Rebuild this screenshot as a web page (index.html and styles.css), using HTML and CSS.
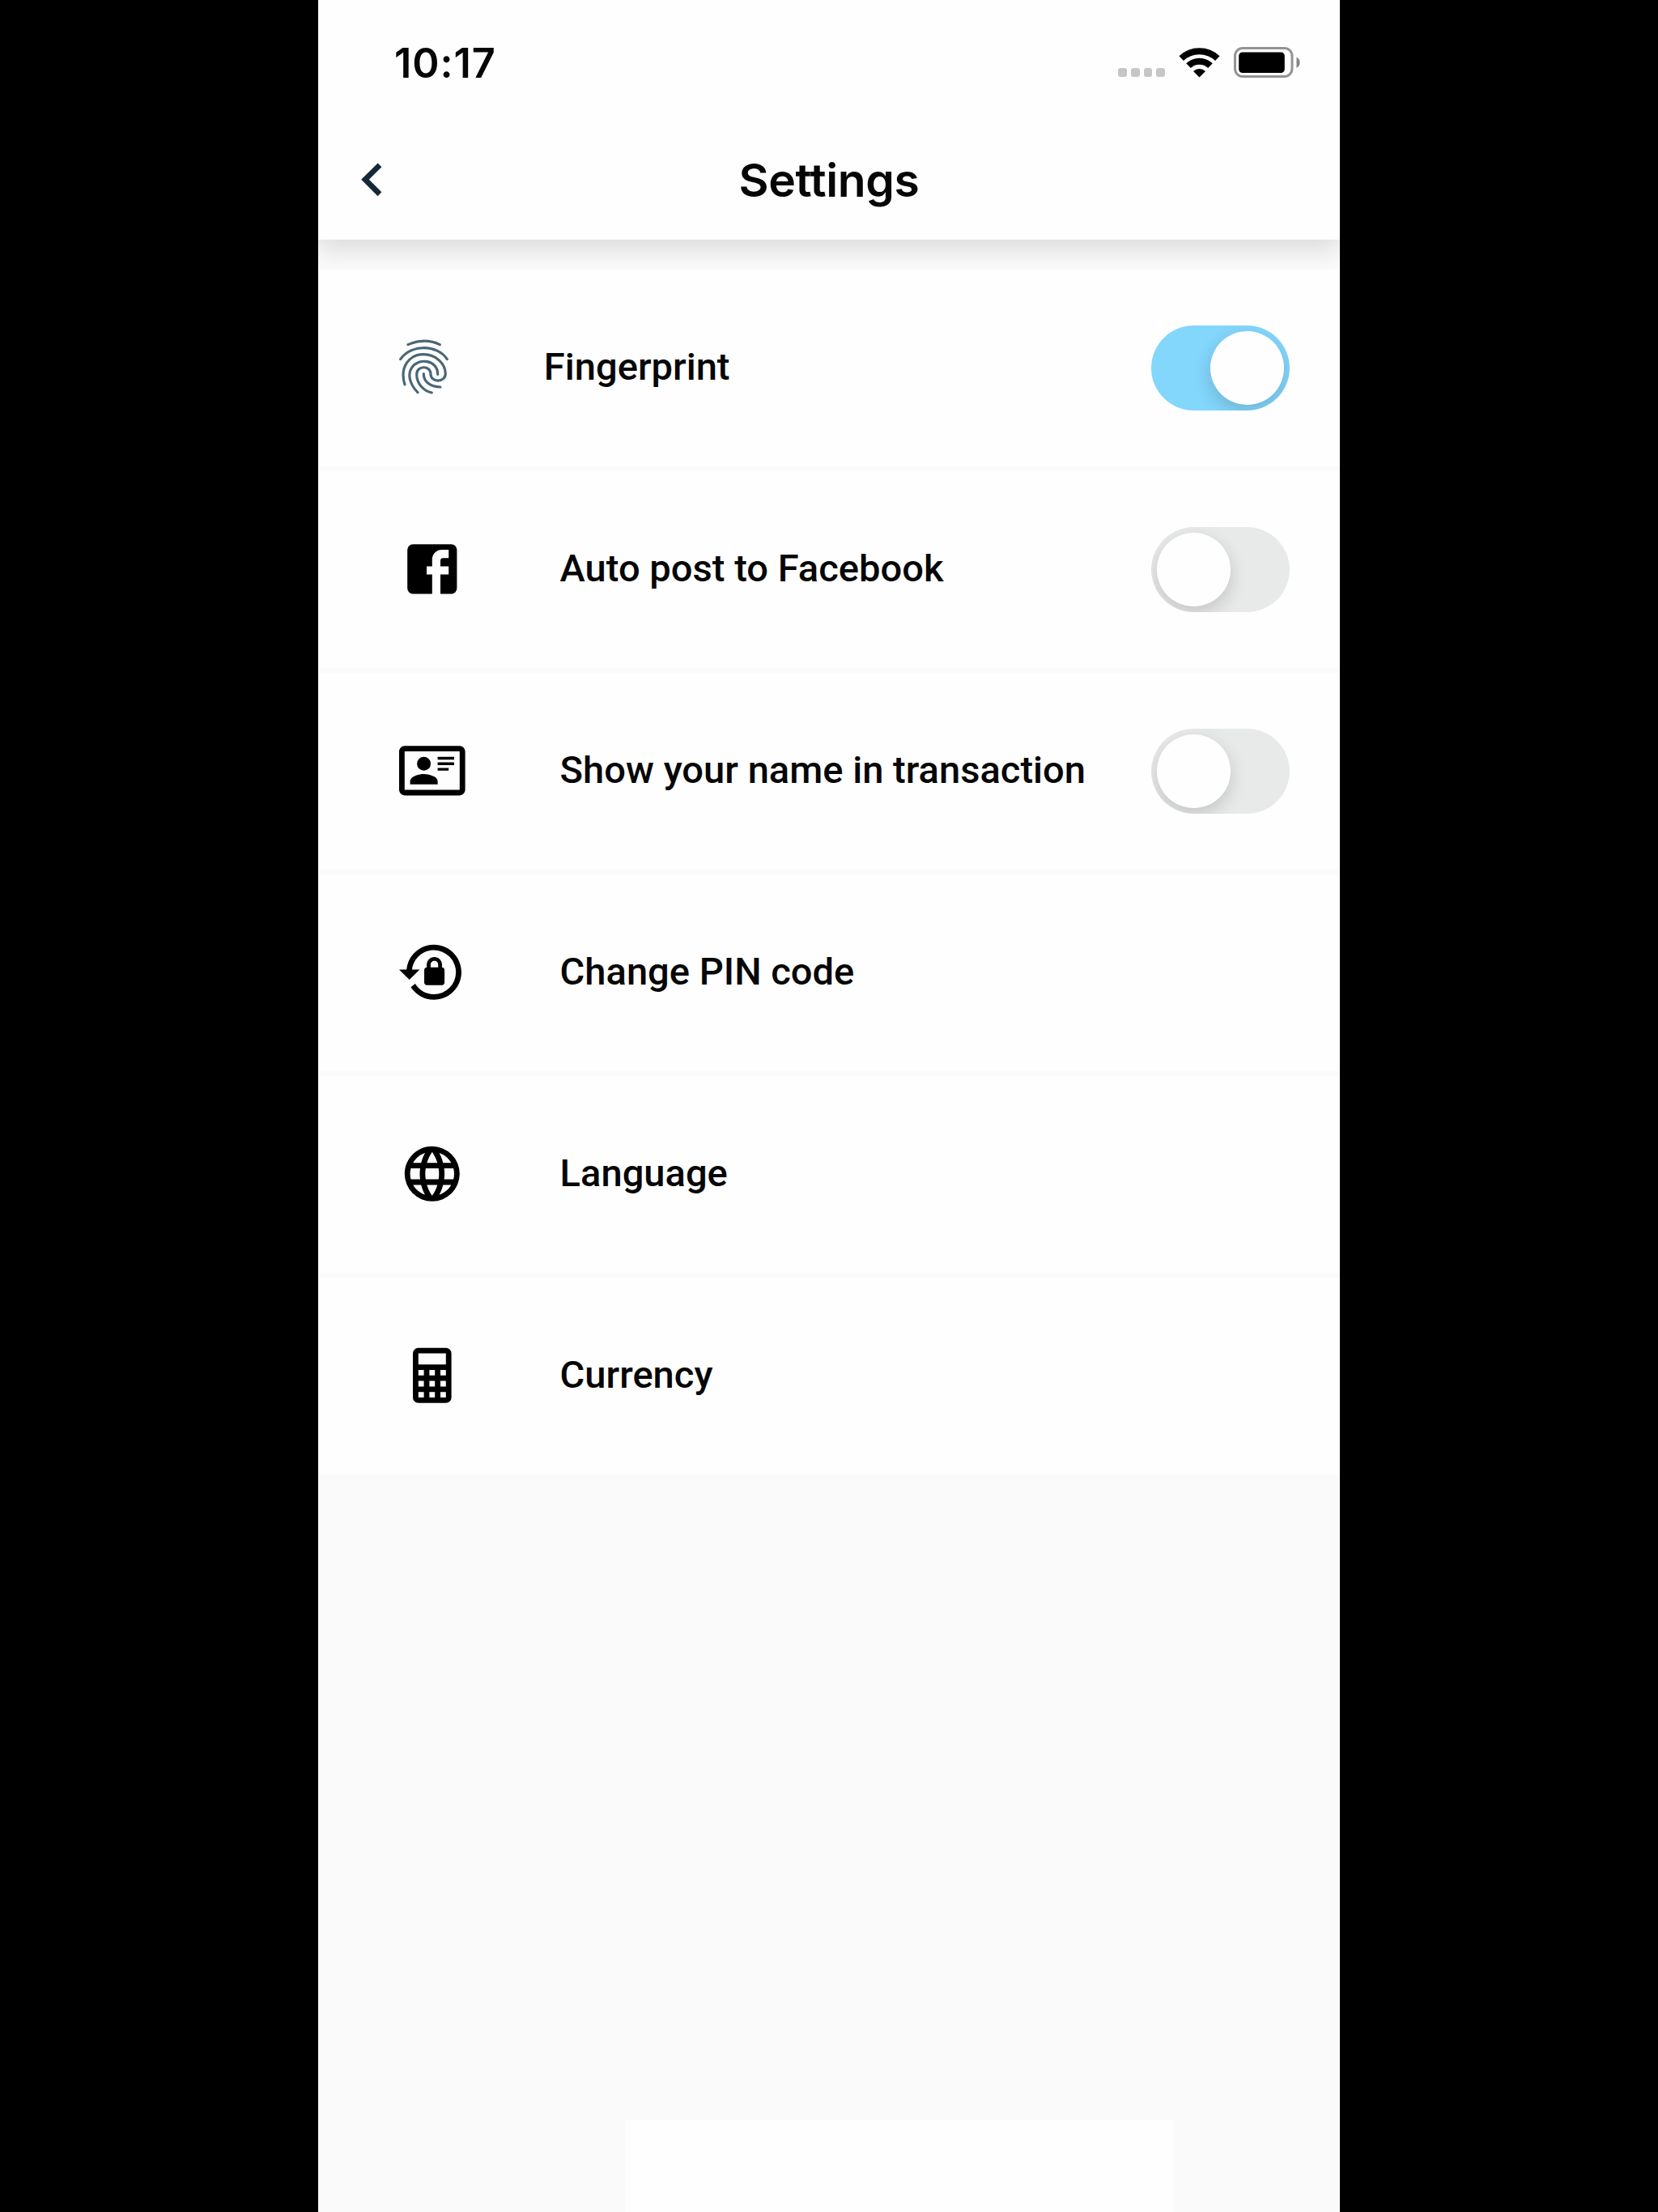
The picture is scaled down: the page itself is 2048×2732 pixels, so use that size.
FILE: index.html
```html
<!DOCTYPE html>
<html lang="en">
<head>
<meta charset="utf-8">
<title>Settings</title>
<link rel="stylesheet" href="styles.css">
</head>
<body>
<div class="phone">
  <header class="header">
    <div class="status">
      <span class="time">10:17</span>
      <div class="status-icons">
        <div class="dots"><i></i><i></i><i></i><i></i></div>
        <svg class="wifi" viewBox="0 0 51 38">
          <path d="M3.2 14.2A32.5 32.5 0 0 1 47.8 14.2" fill="none" stroke="#000" stroke-width="8"/>
          <path d="M12 23.2A19.5 19.5 0 0 1 39 23.2" fill="none" stroke="#000" stroke-width="8"/>
          <path d="M25.5 37.5L18 30A10.8 10.8 0 0 1 33 30Z"/>
        </svg>
        <svg class="battery" viewBox="0 0 83 38">
          <rect x="1.5" y="1.500" width="70.5" height="35" rx="9.5" fill="none" stroke="#939393" stroke-width="3"/>
          <rect x="6.2" y="6.5" width="56.6" height="25.5" rx="4.5"/>
          <path d="M77.5 12.5C83 15 83 23.500 77.500 26Z" fill="#858585"/>
        </svg>
      </div>
    </div>
    <nav class="bar">
      <svg class="back" viewBox="0 0 24 24"><path fill="#142836" d="M15.41,16.58L10.83,12L15.41,7.41L14,6L8,12L14,18L15.41,16.58Z"/></svg>
      <h1 class="title">Settings</h1>
    </nav>
  </header>
  <main class="list">
    <div class="row">
      <svg class="finger" viewBox="60 54 202 218" fill="none" stroke="#4a6677" stroke-width="9.5" stroke-linecap="round">
        <path d="M102,80C140,62 184,62 220,80"/>
        <path d="M74,134C112,78 210,78 247,134"/>
        <path d="M90,228C70,165 105,116 160,116C205,116 240,150 241,187C241,222 186,222 186,188C186,156 134,156 134,190C134,225 160,252 190,258"/>
        <path d="M138,257C112,232 98,192 115,167C140,126 213,136 212,190"/>
        <path d="M160,188C160,218 185,237 222,237"/>
      </svg>
      <span class="label">Fingerprint</span>
      <span class="toggle on"><span class="knob"></span></span>
    </div>
    <div class="row">
      <svg class="icon" viewBox="0 0 24 24"><path d="M5,3H19A2,2 0 0,1 21,5V19A2,2 0 0,1 19,21H5A2,2 0 0,1 3,19V5A2,2 0 0,1 5,3M18,5H15.5A3.5,3.5 0 0,0 12,8.5V11H10V14H12V21H15V14H18V11H15V9A1,1 0 0,1 16,8H18V5Z"/></svg>
      <span class="label">Auto post to Facebook</span>
      <span class="toggle"><span class="knob"></span></span>
    </div>
    <div class="row">
      <svg class="icon" viewBox="0 0 24 24"><path d="M22,3H2C0.91,3.04 0.04,3.91 0,5V19C0.04,20.09 0.91,20.96 2,21H22C23.09,20.96 23.96,20.09 24,19V5C23.96,3.91 23.09,3.04 22,3M22,19H2V5H22V19M14,17V15.75C14,14.09 10.66,13.25 9,13.25C7.34,13.25 4,14.09 4,15.75V17H14M9,7A2.5,2.5 0 0,0 6.5,9.5A2.5,2.5 0 0,0 9,12A2.5,2.5 0 0,0 11.5,9.5A2.5,2.5 0 0,0 9,7M14,7V8H20V7H14M14,9V10H20V9H14M14,11V12H18V11H14"/></svg>
      <span class="label">Show your name in transaction</span>
      <span class="toggle"><span class="knob"></span></span>
    </div>
    <div class="row">
      <svg class="icon" viewBox="0 0 24 24"><path d="M12.63,2C18.16,2 22.64,6.5 22.64,12C22.64,17.5 18.16,22 12.63,22C9.12,22 6.05,20.18 4.26,17.43L5.84,16.18C7.25,18.47 9.76,20 12.64,20A8,8 0 0,0 20.64,12A8,8 0 0,0 12.64,4C8.56,4 5.2,7.06 4.71,11H7.47L3.73,14.73L0,11H2.69C3.19,5.95 7.45,2 12.63,2M15.59,10.24C16.09,10.25 16.5,10.65 16.5,11.16V15.77C16.5,16.27 16.09,16.69 15.58,16.69H10.05C9.54,16.69 9.13,16.27 9.13,15.77V11.16C9.13,10.65 9.54,10.25 10.04,10.24V9.23C10.04,7.7 11.29,6.46 12.81,6.46C14.34,6.46 15.59,7.7 15.59,9.23V10.24M12.81,7.86C12.06,7.86 11.44,8.47 11.44,9.23V10.24H14.19V9.23C14.19,8.47 13.57,7.86 12.81,7.86Z"/></svg>
      <span class="label">Change PIN code</span>
    </div>
    <div class="row">
      <svg class="icon" viewBox="0 0 24 24"><path d="M16.36,14C16.44,13.34 16.5,12.68 16.5,12C16.5,11.32 16.44,10.66 16.36,10H19.74C19.9,10.64 20,11.31 20,12C20,12.69 19.9,13.36 19.74,14M14.59,19.56C15.19,18.45 15.65,17.25 15.97,16H18.92C17.96,17.65 16.43,18.93 14.59,19.56M14.34,14H9.66C9.56,13.34 9.5,12.68 9.5,12C9.5,11.32 9.56,10.65 9.66,10H14.34C14.43,10.65 14.5,11.32 14.5,12C14.5,12.68 14.43,13.34 14.34,14M12,19.96C11.17,18.76 10.5,17.43 10.09,16H13.91C13.5,17.43 12.83,18.76 12,19.96M8,8H5.08C6.03,6.34 7.57,5.06 9.4,4.44C8.8,5.55 8.35,6.75 8,8M5.08,16H8C8.35,17.25 8.8,18.45 9.4,19.56C7.57,18.93 6.03,17.65 5.08,16M4.26,14C4.1,13.36 4,12.69 4,12C4,11.31 4.1,10.64 4.26,10H7.64C7.56,10.66 7.5,11.32 7.5,12C7.5,12.68 7.56,13.34 7.64,14M12,4.03C12.83,5.23 13.5,6.57 13.91,8H10.09C10.5,6.57 11.17,5.23 12,4.03M18.92,8H15.97C15.65,6.75 15.19,5.55 14.59,4.44C16.43,5.07 17.96,6.34 18.92,8M12,2C6.47,2 2,6.5 2,12A10,10 0 0,0 12,22A10,10 0 0,0 22,12A10,10 0 0,0 12,2Z"/></svg>
      <span class="label">Language</span>
    </div>
    <div class="row">
      <svg class="icon" viewBox="0 0 24 24"><path fill-rule="evenodd" d="M7,2H17A2,2 0 0,1 19,4V20A2,2 0 0,1 17,22H7A2,2 0 0,1 5,20V4A2,2 0 0,1 7,2M7,4V8H17V4H7M7,10V12H9V10H7M11,10V12H13V10H11M15,10V12H17V10H15M7,14V16H9V14H7M11,14V16H13V14H11M15,14V16H17V14H15M7,18V20H9V18H7M11,18V20H13V18H11M15,18V20H17V18H15Z"/></svg>
      <span class="label">Currency</span>
    </div>
  </main>
  <div class="bottom-panel"></div>
</div>
</body>
</html>
```

FILE: styles.css
```css
* { box-sizing: border-box; }
body { margin: 0; background: #000; color: #060606; }
svg { display: block; flex: none; }
.phone {
  width: 1262px;
  height: 2732px;
  margin-left: 393px;
  background: #fafafa;
  display: flex;
  flex-direction: column;
  overflow: hidden;
}
.header {
  height: 296px;
  flex: none;
  background: #fefefe;
  box-shadow: 0 12px 30px rgba(0, 0, 0, 0.13);
}
.status {
  height: 148px;
  padding: 0 48px 0 94px;
  display: flex;
  justify-content: space-between;
  align-items: flex-start;
}
.time {
  margin-top: 48px;
  font: 600 50.5px/60px Inter, sans-serif;
  letter-spacing: 0.9px;
}
.status-icons { display: flex; padding-top: 58px; }
.dots { display: flex; gap: 5px; margin: 26px 17px 0 0; }
.dots i { width: 10.7px; height: 10.7px; border-radius: 3px; background: #c6c6c6; }
.wifi { width: 51px; height: 38px; margin-right: 17px; }
.battery { width: 83px; height: 38px; }
.bar {
  height: 148px;
  display: grid;
  grid-template-columns: 108px 1fr 108px;
  align-items: start;
}
.back { width: 81.6px; height: 81.6px; margin: 32.5px 0 0 26px; }
.title {
  margin: 40px 0 0;
  text-align: center;
  font: 600 57px/70px Inter, sans-serif;
  letter-spacing: -0.4px;
}
.list {
  position: relative;
  margin-top: 37px;
  display: flex;
  flex-direction: column;
  gap: 6px;
}
.row {
  height: 243px;
  padding: 0 62px 0 100px;
  background: #fefefe;
  display: flex;
  align-items: center;
}
.icon { width: 81.6px; height: 81.6px; margin: 0 117px 2px 0; }
.finger { width: 67.3px; height: 72.7px; margin: 0 115px 2px -3.500px; }
.label {
  flex: 1;
  margin-bottom: 3px;
  white-space: nowrap;
  font: 500 47.1px/56px Roboto, sans-serif;
}
.toggle {
  width: 171.5px;
  height: 104.5px;
  padding: 7px;
  border-radius: 53px;
  background: #e8eaea;
  display: flex;
  overflow: hidden;
}
.toggle.on { background: #83d6fc; justify-content: flex-end; }
.knob {
  width: 91px;
  height: 91px;
  border-radius: 50%;
  background: #fefefe;
  box-shadow: 0 8px 22px rgba(0, 0, 0, 0.16);
}
.bottom-panel {
  width: 677px;
  height: 114px;
  margin: auto 0 0 379px;
  background: #fefefe;
}
```
